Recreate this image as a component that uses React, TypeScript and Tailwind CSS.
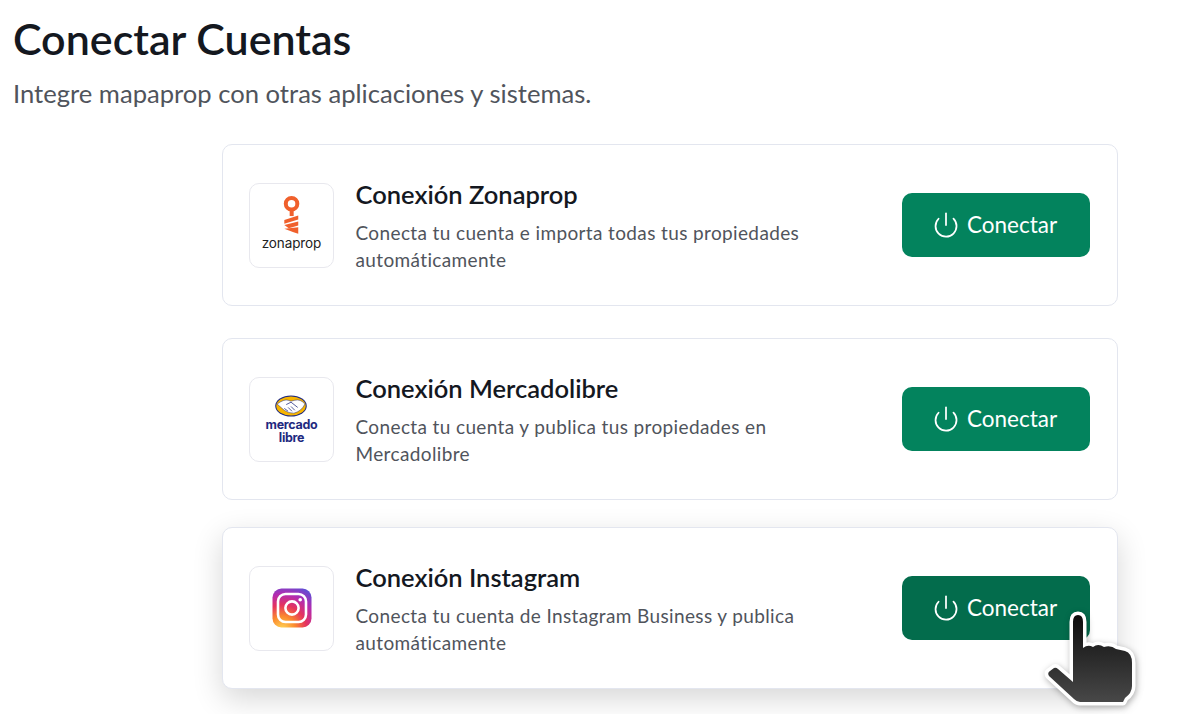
import { Power } from "lucide-react";
import { ReactNode } from "react";

const ZonapropLogo = () => (
  <div className="mb-[3px] flex flex-col items-center">
    <svg width="20" height="39" viewBox="0 0 18 35">
      <circle cx="9.5" cy="7" r="5.2" fill="none" stroke="#f0602c" strokeWidth="3.6" />
      <rect x="7.8" y="12" width="3.6" height="6" fill="#f0602c" />
      <path d="M3 21.5 L15.5 17.5 V21 L3 25 Z" fill="#f0602c" />
      <path d="M3 26 L15.5 23 V26.5 L7 29 Z" fill="#f0602c" />
      <path d="M3 29.5 L15.5 28 V34 Q12 33 3 29.5 Z" fill="#f0602c" />
    </svg>
    <span className="mt-[1px] text-[13.5px] leading-[15px] text-[#222] font-['Inter',sans-serif] tracking-[-0.1px]">
      zonaprop
    </span>
  </div>
);

const MercadoLogo = () => (
  <div className="flex flex-col items-center">
    <svg width="34" height="22" viewBox="0 0 34 23">
      <ellipse cx="17" cy="11.5" rx="16.5" ry="11" fill="#1f2a80" />
      <ellipse cx="17" cy="11.5" rx="15.4" ry="10" fill="#f7b500" />
      <path d="M2.5 9.5 Q10 4 14 5.5 L17 6.5 L21 5.5 Q27 4 31.5 9.5 Q28 17 20 19 Q14 19 10 16 Z" fill="#fff" stroke="#1f2a80" strokeWidth="0.5" />
      <path d="M12 10 L17 7.5 L24 13 M10 14 L14 17 M14 13 L18 17 M17 12 L21 16" fill="none" stroke="#1f2a80" strokeWidth="0.8" />
    </svg>
    <span className="mt-[1px] text-[12.5px] leading-[13px] font-bold text-[#1f2a80] font-['Inter',sans-serif] tracking-[-0.3px]">
      mercado
    </span>
    <span className="text-[12.5px] leading-[13px] font-bold text-[#1f2a80] font-['Inter',sans-serif] tracking-[-0.3px]">
      libre
    </span>
  </div>
);

const InstagramLogo = () => (
  <svg width="40" height="40" viewBox="0 0 40 40">
    <defs>
      <radialGradient id="ig" cx="25%" cy="105%" r="120%">
        <stop offset="0%" stopColor="#ffd858" />
        <stop offset="28%" stopColor="#fb8a2e" />
        <stop offset="52%" stopColor="#e5335e" />
        <stop offset="75%" stopColor="#b42bb0" />
        <stop offset="100%" stopColor="#5b4fd6" />
      </radialGradient>
    </defs>
    <rect x="0.5" y="0.5" width="39" height="39" rx="9" fill="url(#ig)" />
    <rect x="6" y="6" width="28" height="28" rx="7.5" fill="none" stroke="#fff" strokeWidth="2.6" />
    <circle cx="20" cy="20" r="6.6" fill="none" stroke="#fff" strokeWidth="2.6" />
    <circle cx="28.2" cy="11.8" r="1.8" fill="#fff" />
  </svg>
);

const HandCursor = () => (
  <svg
    width="100"
    height="104"
    viewBox="0 0 100 104"
    className="absolute left-[1040px] top-[606px] drop-shadow-[1px_2px_3px_rgba(0,0,0,0.3)]"
  >
    <defs>
      <linearGradient id="hand" x1="0" y1="0" x2="0" y2="1">
        <stop offset="0%" stopColor="#0d0d0d" />
        <stop offset="100%" stopColor="#484848" />
      </linearGradient>
    </defs>
    <path
      d="M33 16 Q33 9 38 9 Q43 9 43 16 V42 Q48 38 53 41 Q58 37 64 41 Q71 39 76 43 L85 45 Q92 47 92 57 V80 Q92 87 85 92 L83 96 H40 Q37 96 34 93 L9 70 Q7 67 10 65 L14 62 Q16 61 18 63 L33 76 Z"
      fill="url(#hand)"
      stroke="#fff"
      strokeWidth="7"
      strokeLinejoin="round"
      paintOrder="stroke"
    />
  </svg>
);

interface CardProps {
  logo: ReactNode;
  title: string;
  lines: string[];
  active?: boolean;
}

const Card = ({ logo, title, lines, active }: CardProps) => (
  <div
    className={`flex h-[162px] items-center rounded-[10px] border border-[#e3e6ef] bg-white pl-[26px] pr-[27px] ${
      active ? "shadow-[0_10px_30px_rgba(0,0,0,0.16)]" : ""
    }`}
  >
    <div className="flex h-[85px] w-[85px] shrink-0 items-center justify-center rounded-[10px] border border-[#e8e8ee]">
      {logo}
    </div>
    <div className="ml-[21.5px] flex-1 pt-[3px]">
      <h3 className="text-[25.5px] font-semibold leading-[28px] text-[#14181f]">{title}</h3>
      <p className="mt-[11px] text-[19px] leading-[27px] tracking-[0.37px] text-[#50545c]">
        {lines[0]}
        <br />
        {lines[1]}
      </p>
    </div>
    <button
      className={`flex h-[64px] w-[188px] shrink-0 items-center justify-center gap-[7px] rounded-[10px] pr-[3px] text-[22.5px] text-white ${
        active ? "bg-[#036c4c]" : "bg-[#03835d]"
      }`}
    >
      <Power size={28} strokeWidth={1.5} />
      Conectar
    </button>
  </div>
);

export default function App() {
  return (
    <div className="relative h-[714px] w-[1181px] overflow-hidden bg-white font-['Lato',sans-serif]">
      <div className="px-[13px] pt-[15px]">
        <h1 className="text-[43px] font-semibold leading-[48px] text-[#14181f]">Conectar Cuentas</h1>
        <p className="mt-[15px] text-[25.6px] leading-[30px] text-[#50545c]">
          Integre mapaprop con otras aplicaciones y sistemas.
        </p>
      </div>
      <div className="ml-[222px] mt-[36px] flex w-[896px] flex-col">
        <Card
          logo={<ZonapropLogo />}
          title="Conexión Zonaprop"
          lines={["Conecta tu cuenta e importa todas tus propiedades", "automáticamente"]}
        />
        <div className="mt-[32px]">
          <Card
            logo={<MercadoLogo />}
            title="Conexión Mercadolibre"
            lines={["Conecta tu cuenta y publica tus propiedades en", "Mercadolibre"]}
          />
        </div>
        <div className="mt-[27px]">
          <Card
            active
            logo={<InstagramLogo />}
            title="Conexión Instagram"
            lines={["Conecta tu cuenta de Instagram Business y publica", "automáticamente"]}
          />
        </div>
      </div>
      <HandCursor />
    </div>
  );
}
